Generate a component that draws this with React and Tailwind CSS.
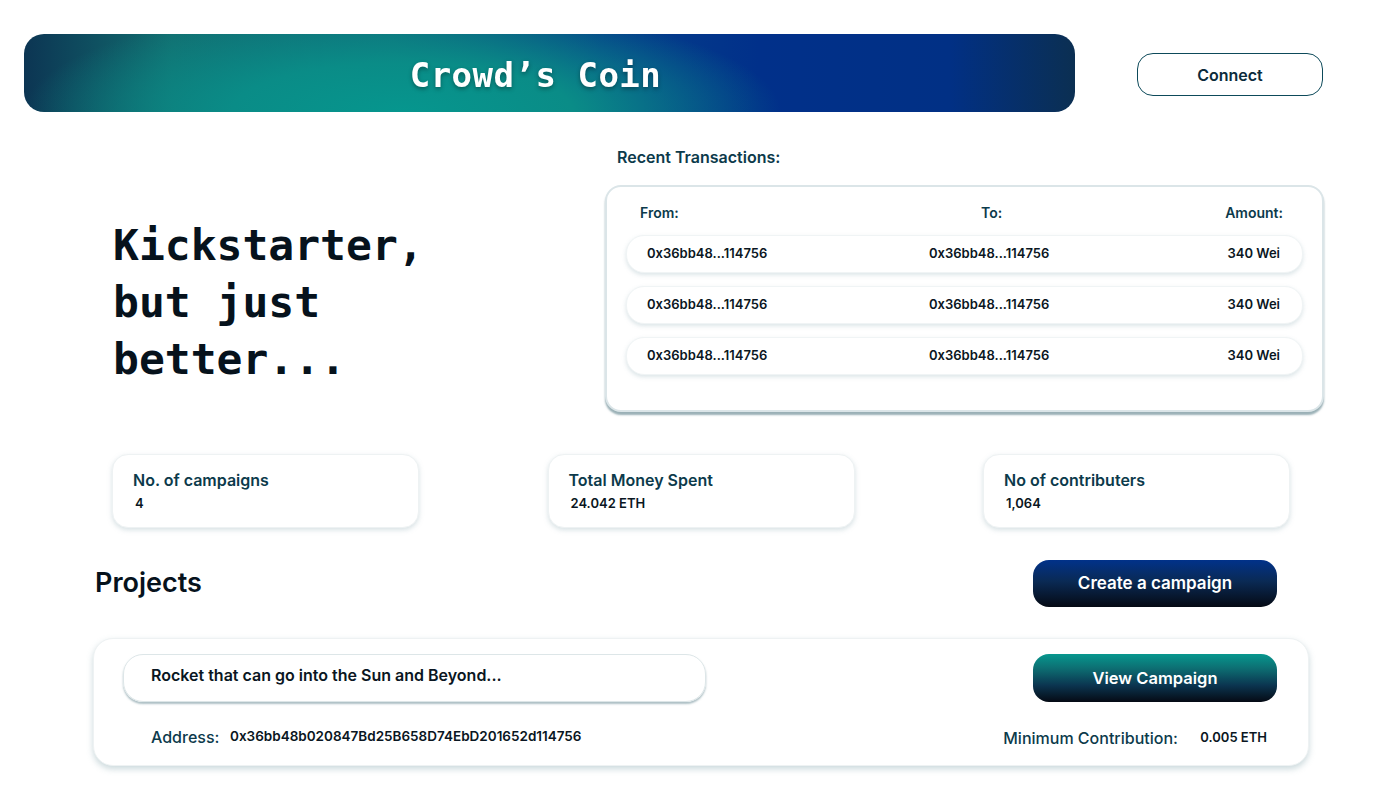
import React from "react";

const sans = "font-['Inter','Noto_Sans',sans-serif]";
const mono = "font-['DejaVu_Sans_Mono','Liberation_Mono',monospace]";

const txs = [
  { from: "0x36bb48...114756", to: "0x36bb48...114756", amount: "340 Wei" },
  { from: "0x36bb48...114756", to: "0x36bb48...114756", amount: "340 Wei" },
  { from: "0x36bb48...114756", to: "0x36bb48...114756", amount: "340 Wei" },
];

const stats = [
  { label: "No. of campaigns", value: "4" },
  { label: "Total Money Spent", value: "24.042 ETH" },
  { label: "No of contributers", value: "1,064" },
];

function StatCard({ label, value }) {
  return (
    <div className="w-[307px] h-[74px] rounded-2xl bg-white border border-[#eef2f3] shadow-[0_2px_5px_rgba(140,170,178,0.35)] pl-[20px] pt-[15px]">
      <div className="text-[16px] font-semibold text-[#0c3a4b] leading-5">{label}</div>
      <div className="text-[13px] font-semibold text-[#0a1622] mt-[3px] ml-[2px] leading-5">{value}</div>
    </div>
  );
}

export default function App() {
  return (
    <div className={`${sans} w-[1400px] h-[799px] bg-white relative overflow-hidden`}>
      {/* Top bar */}
      <div className="flex items-start pt-[34px] pl-[24px]">
        <div className="w-[1051px] h-[78px] rounded-[20px] flex items-center justify-center pr-[28px] pt-[4px] bg-[radial-gradient(ellipse_36%_140%_at_36%_100%,#06968e_0%,#0a8c87_45%,rgba(10,120,120,0)_100%),linear-gradient(90deg,#0c3553_0%,#126e70_14%,#0f6a7a_35%,#05408a_55%,#01308a_70%,#013085_88%,#0b2f52_100%)]">
          <span className={`${mono} text-white text-[34px] font-bold tracking-[0.5px] drop-shadow-[0_2px_2px_rgba(0,0,0,0.35)]`}>
            Crowd’s Coin
          </span>
        </div>
        <button className="ml-[62px] mt-[19px] w-[186px] h-[43px] rounded-[16px] border border-[#0d4a5a] text-[16px] font-semibold text-[#0b2b3b]">
          Connect
        </button>
      </div>

      {/* Hero + transactions */}
      <div className="flex mt-[35px]">
        <div className="w-[605px] pl-[113px] pt-[70px]">
          <h1 className={`${mono} text-[43px] font-bold leading-[57px] text-[#06121c]`}>
            Kickstarter,
            <br />
            but just
            <br />
            better...
          </h1>
        </div>
        <div className="w-[719px]">
          <div className="pl-[12px] text-[16px] font-semibold text-[#0c3a4b] leading-5">Recent Transactions:</div>
          <div className="mt-[18px] h-[227px] rounded-2xl bg-white border-2 border-[#dbe5e8] shadow-[0_3px_2px_rgba(120,150,158,0.75)] px-[19px] pt-[16px]">
            <div className="flex text-[14px] font-semibold text-[#0c3a4b] pl-[14px] pr-[20px] leading-5">
              <span className="w-[341px]">From:</span>
              <span className="flex-1">To:</span>
              <span>Amount:</span>
            </div>
            <div className="mt-[12px] flex flex-col gap-[13px]">
              {txs.map((t, i) => (
                <div
                  key={i}
                  className="h-[38px] rounded-[18px] bg-white border border-[#f0f4f5] shadow-[0_2px_4px_rgba(140,170,178,0.3)] flex items-center pl-[20px] pr-[22px] text-[13px] font-semibold text-[#0a1622]"
                >
                  <span className="w-[282px]">{t.from}</span>
                  <span className="flex-1">{t.to}</span>
                  <span>{t.amount}</span>
                </div>
              ))}
            </div>
          </div>
        </div>
      </div>

      {/* Stats */}
      <div className="flex justify-between pl-[112px] pr-[110px] mt-[42px]">
        {stats.map((s) => (
          <StatCard key={s.label} {...s} />
        ))}
      </div>

      {/* Projects header */}
      <div className="flex items-center justify-between pl-[95px] pr-[123px] mt-[32px]">
        <h2 className="text-[27px] font-semibold text-[#06121c]">Projects</h2>
        <button className="w-[244px] h-[47px] rounded-[16px] bg-[linear-gradient(180deg,#01328a_0%,#0a2a55_45%,#050a14_100%)] text-white text-[17px] font-semibold">
          Create a campaign
        </button>
      </div>

      {/* Project card */}
      <div className="mx-[93px] w-[1216px] mt-[31px] h-[128px] rounded-[20px] bg-white border border-[#eef2f3] shadow-[0_3px_6px_rgba(140,170,178,0.45)] pl-[29px] pr-[31px] pt-[15px]">
        <div className="flex justify-between">
          <div className="w-[583px] h-[48px] rounded-[20px] border border-[#dde6e8] shadow-[0_2px_2px_rgba(120,150,158,0.6)] flex items-center pl-[27px] pb-[6px] text-[16px] font-semibold text-[#0a1622]">
            Rocket that can go into the Sun and Beyond...
          </div>
          <button className="w-[244px] h-[48px] rounded-[16px] bg-[linear-gradient(180deg,#07978e_0%,#0d6e72_30%,#0b3550_65%,#050a14_100%)] text-white text-[16.5px] font-semibold">
            View Campaign
          </button>
        </div>
        <div className="flex justify-between items-center mt-[21px]">
          <div className="flex items-center pl-[28px]">
            <span className="text-[16px] font-medium text-[#0c3a4b] w-[79px]">Address:</span>
            <span className="text-[13.5px] font-semibold text-[#0a1622]">0x36bb48b020847Bd25B658D74EbD201652d114756</span>
          </div>
          <div className="flex items-center pr-[10px] pt-[3px]">
            <span className="text-[16px] font-medium text-[#0c3a4b] w-[197px]">Minimum Contribution:</span>
            <span className="text-[13px] font-semibold text-[#0a1622]">0.005 ETH</span>
          </div>
        </div>
      </div>
    </div>
  );
}
